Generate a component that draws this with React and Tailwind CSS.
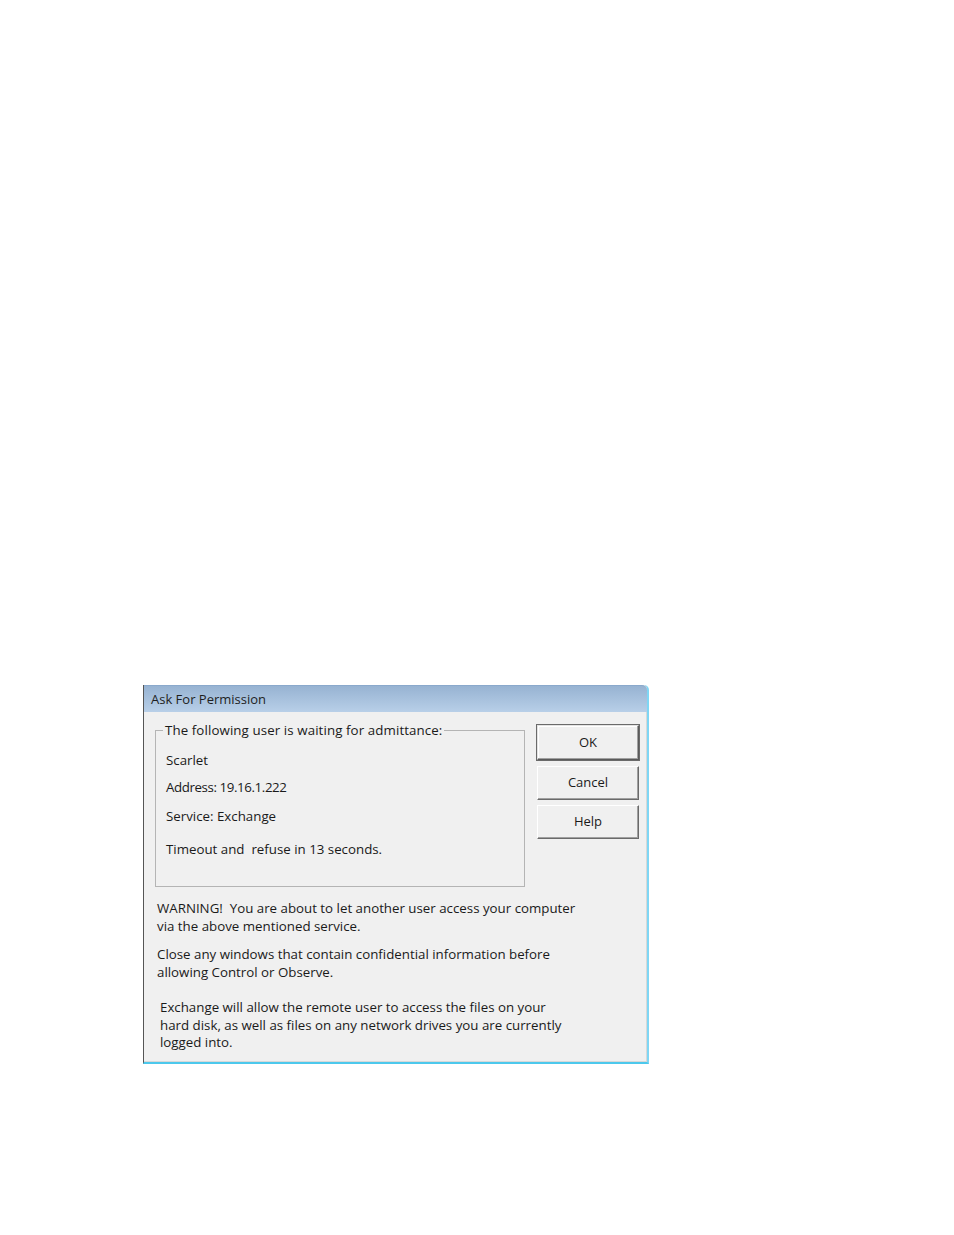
export default function App() {
  const font = { fontFamily: '"Open Sans", "Noto Sans", sans-serif' }

  return (
    <div className="min-h-[1235px] w-[954px] bg-white pt-[685px] pl-[143px]" style={font}>
      <div className="w-[506px] h-[379px] flex flex-col border-l border-l-[#555] border-r-2 border-r-[#7fd6f4] border-b-2 border-b-[#4cc8ec] rounded-tr-[5px] bg-[#f0f0f0]">
        <div className="h-[27px] shrink-0 flex items-center px-[7px] rounded-tr-[5px] bg-gradient-to-b from-[#97b3d2] to-[#b8cfe8] border-t border-t-[#8aa9cc]">
          <span className="text-[13px] text-[#1e1e1e] leading-none">Ask For Permission</span>
        </div>

        <div className="flex-1 flex flex-col border-r border-b border-[#d8d8d8] text-[13.3px] text-[#1a1a1a] leading-[17.5px]">
          <div className="flex pt-[12px]">
            <fieldset className="ml-[11px] w-[370px] h-[163px] border border-[#b4b4b4] px-[10px] min-w-0">
              <legend className="ml-[-3px] px-[2px] leading-[13px] tracking-[0.1px]">The following user is waiting for admittance:</legend>
              <div className="mt-[15px]">Scarlet</div>
              <div className="mt-[9px] tracking-[-0.4px]">Address: 19.16.1.222</div>
              <div className="mt-[12px]">Service: Exchange</div>
              <div className="mt-[15px]">Timeout and&nbsp; refuse in 13 seconds.</div>
            </fieldset>

            <div className="ml-[12px] mt-[1px] flex flex-col gap-[5px] text-[13px]">
              <button className="w-[102px] h-[35px] bg-[#f0f0f0] border border-t-[#e3e3e3] border-l-[#e3e3e3] border-r-[#5a5a5a] border-b-[#5a5a5a] shadow-[inset_-1px_-1px_0_#a0a0a0,inset_1px_1px_0_#ffffff] outline outline-1 outline-[#6a6a6a]">
                OK
              </button>
              <button className="w-[102px] h-[34px] mt-[1px] bg-[#f0f0f0] border border-t-[#ffffff] border-l-[#ffffff] border-r-[#6a6a6a] border-b-[#6a6a6a] shadow-[inset_-1px_-1px_0_#a0a0a0]">
                Cancel
              </button>
              <button className="w-[102px] h-[34px] bg-[#f0f0f0] border border-t-[#ffffff] border-l-[#ffffff] border-r-[#6a6a6a] border-b-[#6a6a6a] shadow-[inset_-1px_-1px_0_#a0a0a0]">
                Help
              </button>
            </div>
          </div>

          <div className="pl-[13px] mt-[13px]">
            <p>WARNING!&nbsp; You are about to let another user access your computer<br />via the above mentioned service.</p>
            <p className="mt-[11px]">Close any windows that contain confidential information before<br />allowing Control or Observe.</p>
          </div>
          <p className="pl-[16px] mt-[18px]">
            Exchange will allow the remote user to access the files on your<br />hard disk, as well as files on any network drives you are currently<br />logged into.
          </p>
        </div>
      </div>
    </div>
  )
}
